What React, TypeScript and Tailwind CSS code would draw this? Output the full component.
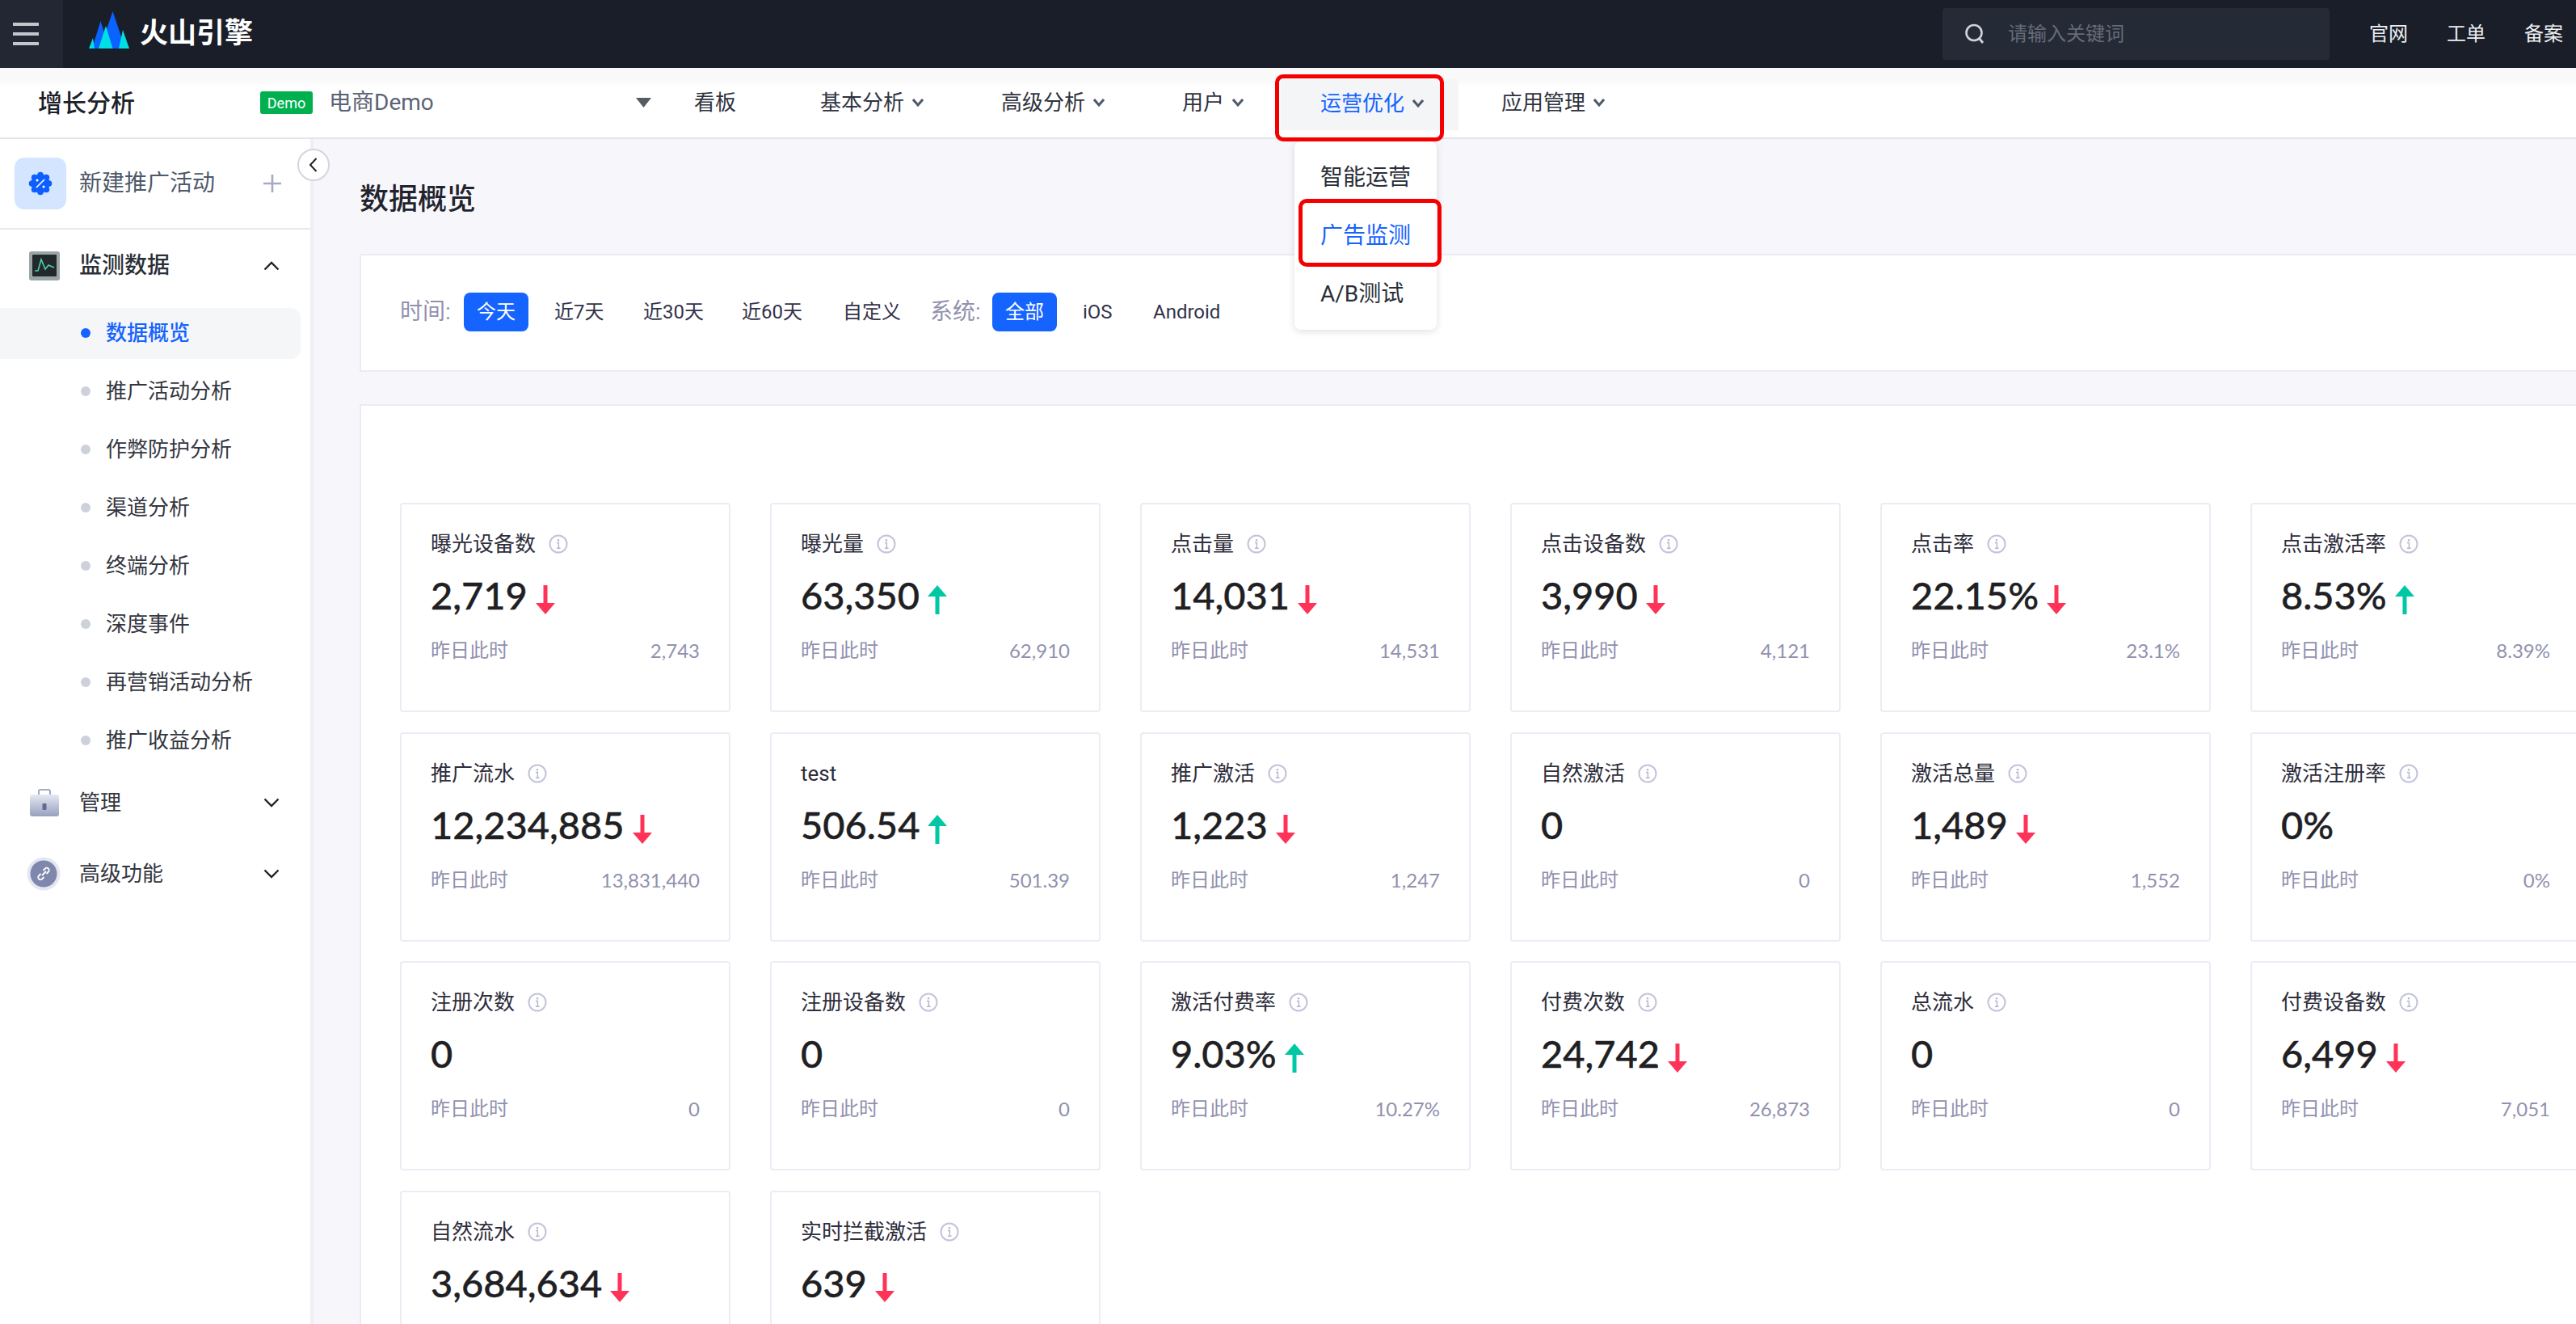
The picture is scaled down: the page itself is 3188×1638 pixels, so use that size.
import React from "react";

type Metric = { t: string; v: string; y?: string; d?: "up" | "down"; noInfo?: boolean };

const metrics: Metric[] = [
  { t: "曝光设备数", v: "2,719", y: "2,743", d: "down" },
  { t: "曝光量", v: "63,350", y: "62,910", d: "up" },
  { t: "点击量", v: "14,031", y: "14,531", d: "down" },
  { t: "点击设备数", v: "3,990", y: "4,121", d: "down" },
  { t: "点击率", v: "22.15%", y: "23.1%", d: "down" },
  { t: "点击激活率", v: "8.53%", y: "8.39%", d: "up" },
  { t: "推广流水", v: "12,234,885", y: "13,831,440", d: "down" },
  { t: "test", v: "506.54", y: "501.39", d: "up", noInfo: true },
  { t: "推广激活", v: "1,223", y: "1,247", d: "down" },
  { t: "自然激活", v: "0", y: "0" },
  { t: "激活总量", v: "1,489", y: "1,552", d: "down" },
  { t: "激活注册率", v: "0%", y: "0%" },
  { t: "注册次数", v: "0", y: "0" },
  { t: "注册设备数", v: "0", y: "0" },
  { t: "激活付费率", v: "9.03%", y: "10.27%", d: "up" },
  { t: "付费次数", v: "24,742", y: "26,873", d: "down" },
  { t: "总流水", v: "0", y: "0" },
  { t: "付费设备数", v: "6,499", y: "7,051", d: "down" },
  { t: "自然流水", v: "3,684,634", d: "down" },
  { t: "实时拦截激活", v: "639", d: "down" },
];

const subItems = ["数据概览", "推广活动分析", "作弊防护分析", "渠道分析", "终端分析", "深度事件", "再营销活动分析", "推广收益分析"];

function Logo() {
  return (
    <svg width="50" height="46" viewBox="0 0 50 46" className="shrink-0">
      <polygon points="4,46 14.5,12 25,46" fill="#0a62ff" />
      <polygon points="14,46 29.5,0 45,46" fill="#0a62ff" />
      <polygon points="0,46 5,33 7,46" fill="#00dfe3" />
      <polygon points="12,46 21,18 29.5,46" fill="#00dfe3" />
      <polygon points="37,46 42,23 50,46" fill="#00dfe3" />
    </svg>
  );
}

function NavChevron() {
  return (
    <svg width="14" height="12" viewBox="0 0 14 12" fill="none" className="shrink-0">
      <path d="M1 2 L7 9 L13 2" stroke="#4e5969" strokeWidth="3" />
    </svg>
  );
}

function SideChevron({ up }: { up?: boolean }) {
  return (
    <svg width="20" height="12" viewBox="0 0 20 12" fill="none" className="shrink-0">
      <path d={up ? "M1.5 10.5 L10 2 L18.5 10.5" : "M1.5 1.5 L10 10 L18.5 1.5"} stroke="#1f2329" strokeWidth="2.4" />
    </svg>
  );
}

function InfoIcon() {
  return (
    <svg width="24" height="24" viewBox="0 0 24 24" fill="none" className="shrink-0">
      <circle cx="12" cy="12" r="10.5" stroke="#c3c3dc" strokeWidth="2" />
      <circle cx="12" cy="7.2" r="1.2" fill="#b4b4d0" />
      <path d="M10 10.5 H12.4 V17 M10 17.2 H14.6" stroke="#b4b4d0" strokeWidth="1.4" />
    </svg>
  );
}

function Arrow({ d }: { d: "up" | "down" }) {
  const c = d === "up" ? "#00c8a5" : "#ff3358";
  return (
    <svg width="24" height="36" viewBox="0 0 24 36" className="ml-[10px] mt-[8px] shrink-0">
      {d === "up" ? (
        <>
          <polygon points="12,0 24,14 0,14" fill={c} />
          <rect x="9.5" y="12" width="5" height="24" fill={c} />
        </>
      ) : (
        <>
          <polygon points="12,36 24,22 0,22" fill={c} />
          <rect x="9.5" y="0" width="5" height="24" fill={c} />
        </>
      )}
    </svg>
  );
}

function Card({ m }: { m: Metric }) {
  return (
    <div className="h-[259px] w-[409px] shrink-0 rounded-[4px] border-2 border-[#ececf5] bg-white px-[36px] pt-[31px]">
      <div className="flex h-[36px] items-center text-[26px] leading-[36px] text-[#2e2e3c]">
        <span>{m.t}</span>
        {!m.noInfo && (
          <span className="ml-[16px]">
            <InfoIcon />
          </span>
        )}
      </div>
      <div className="mt-[19px] flex h-[56px] items-center">
        <span className="pb-[4px] [font-family:Lato,sans-serif] text-[47px] leading-[56px] font-medium text-[#1f1f24] [-webkit-text-stroke:0.4px_#1f1f24]">{m.v}</span>
        {m.d && <Arrow d={m.d} />}
      </div>
      {m.y && (
        <div className="mt-[21px] flex h-[36px] items-center justify-between text-[24px] leading-[36px] text-[#9191ae]">
          <span>昨日此时</span>
          <span className="[font-family:Lato,sans-serif]">{m.y}</span>
        </div>
      )}
    </div>
  );
}

function NavItem({ label, w }: { label: string; w: string }) {
  return (
    <div className={`${w} flex items-center gap-[10px] text-[26px] text-[#2f3340]`}>
      <span>{label}</span>
      <NavChevron />
    </div>
  );
}

export default function App() {
  return (
    <div className="relative h-screen w-full overflow-hidden bg-[#f7f7fb] [font-family:Roboto,'Noto_Sans_CJK_SC',sans-serif]">
      {/* Top bar */}
      <header className="flex h-[84px] items-center bg-[#1a1e28]">
        <div className="flex h-full w-[78px] flex-col items-start justify-center gap-[8px] bg-[#222733] pl-[16px]">
          <span className="block h-[4px] w-[32px] bg-[#c4c6ce]" />
          <span className="block h-[4px] w-[32px] bg-[#c4c6ce]" />
          <span className="block h-[4px] w-[32px] bg-[#c4c6ce]" />
        </div>
        <div className="ml-[32px] flex items-center pb-[10px]">
          <Logo />
        </div>
        <span className="ml-[13px] text-[35px] font-bold text-white">火山引擎</span>
        <div className="ml-auto flex h-[64px] w-[479px] items-center rounded-[4px] bg-[#252a37] pl-[27px]">
          <svg width="26" height="26" viewBox="0 0 26 26" fill="none">
            <circle cx="12" cy="11.5" r="9.5" stroke="#cfd2d8" strokeWidth="2.6" />
            <path d="M18 18 L23 24" stroke="#cfd2d8" strokeWidth="2.8" />
          </svg>
          <span className="ml-[28px] text-[24px] text-[#666b78]">请输入关键词</span>
        </div>
        <div className="ml-[49px] flex gap-[48px] pr-[16px] text-[24px] text-[#eceef2]">
          <span>官网</span>
          <span>工单</span>
          <span>备案</span>
        </div>
      </header>

      {/* Sub nav */}
      <nav className="flex h-[88px] items-center border-b-2 border-[#e4e4ea] bg-[linear-gradient(#f9f9f9_14px,#ffffff_24px)] pl-[47px]">
        <span className="w-[275px] text-[30px] font-medium text-[#1d2129]">增长分析</span>
        <span className="flex h-[28px] w-[65px] items-center justify-center rounded-[3px] bg-[#00b04f] text-[18px] text-white">Demo</span>
        <span className="ml-[20px] w-[380px] text-[28px] text-[#5b6475]">电商Demo</span>
        <svg width="19" height="12" viewBox="0 0 19 12" className="shrink-0">
          <polygon points="0,0 19,0 9.5,12" fill="#555a63" />
        </svg>
        <span className="ml-[53px] w-[156px] text-[26px] text-[#2f3340]">看板</span>
        <NavItem label="基本分析" w="w-[224px]" />
        <NavItem label="高级分析" w="w-[224px]" />
        <NavItem label="用户" w="w-[122px]" />
        <div className="mr-[53px] mt-[14px] flex h-[63px] w-[220px] items-center gap-[10px] self-start bg-[#f4f5f7] pb-[3px] pl-[49px] text-[26px] text-[#1664ff]">
          <span>运营优化</span>
          <NavChevron />
        </div>
        <NavItem label="应用管理" w="w-[224px]" />
      </nav>

      <div className="flex h-[calc(100vh-172px)]">
        {/* Sidebar */}
        <aside className="w-[388px] shrink-0 border-r-4 border-[#eeeef4] bg-white">
          <div className="flex h-[112px] items-center border-b-2 border-[#e8e8ee] pl-[18px] pr-[36px]">
            <div className="flex h-[64px] w-[64px] items-center justify-center rounded-[12px] bg-[#d4e5ff]">
              <svg width="30" height="30" viewBox="0 0 30 30">
                <g fill="#0f5fff">
                  <circle cx="15" cy="15" r="11.5" />
                  <circle cx="15" cy="4.5" r="3.8" />
                  <circle cx="15" cy="25.5" r="3.8" />
                  <circle cx="4.5" cy="15" r="3.8" />
                  <circle cx="25.5" cy="15" r="3.8" />
                  <circle cx="7.6" cy="7.6" r="3.8" />
                  <circle cx="22.4" cy="7.6" r="3.8" />
                  <circle cx="7.6" cy="22.4" r="3.8" />
                  <circle cx="22.4" cy="22.4" r="3.8" />
                </g>
                <path d="M10 20 L20 10" stroke="#fff" strokeWidth="1.6" />
                <circle cx="11" cy="11" r="1.5" fill="#fff" />
                <circle cx="19" cy="19" r="1.5" fill="#fff" />
              </svg>
            </div>
            <span className="ml-[16px] text-[28px] text-[#4e5969]">新建推广活动</span>
            <svg width="22" height="22" viewBox="0 0 22 22" className="ml-auto">
              <path d="M11 0 V22 M0 11 H22" stroke="#a6aac2" strokeWidth="2.6" />
            </svg>
          </div>

          <div className="flex h-[92px] items-center pb-[3px] pl-[36px] pr-[38px]">
            <svg width="38" height="36" viewBox="0 0 38 36" className="shrink-0">
              <rect width="38" height="36" rx="3" fill="#9aa5a6" />
              <rect x="4" y="4" width="30" height="27" rx="1" fill="#23282c" />
              <path d="M7 24 H11 L15 10 L20 22 L24 17 L31 20" fill="none" stroke="#4fd1a5" strokeWidth="1.6" />
            </svg>
            <span className="ml-[24px] text-[28px] font-medium text-[#2b2f38]">监测数据</span>
            <span className="ml-auto">
              <SideChevron up />
            </span>
          </div>

          <div className="flex flex-col">
            {subItems.map((s, i) => (
              <div key={s} className="flex h-[72px] items-center">
                <div className={`flex h-[63px] w-[372px] items-center rounded-r-[12px] pl-[100px] ${i === 0 ? "bg-[#f5f6f8]" : ""}`}>
                  <span className={`block h-[12px] w-[12px] rounded-full ${i === 0 ? "bg-[#1664ff]" : "bg-[#cdd1d9]"}`} />
                  <span className={`ml-[19px] text-[26px] ${i === 0 ? "font-medium text-[#1664ff]" : "text-[#33363f]"}`}>{s}</span>
                </div>
              </div>
            ))}
          </div>

          <div className="-mt-[3px] flex h-[88px] items-center pl-[37px] pr-[38px]">
            <svg width="36" height="34" viewBox="0 0 36 34" className="shrink-0">
              <defs>
                <linearGradient id="case" x1="0" y1="0" x2="0" y2="1">
                  <stop offset="0" stopColor="#e6e9f4" />
                  <stop offset="1" stopColor="#97a0bd" />
                </linearGradient>
              </defs>
              <path d="M11 8 V3 Q11 1 13 1 H23 Q25 1 25 3 V8" fill="none" stroke="#a3aac4" strokeWidth="2" />
              <rect y="7" width="36" height="27" rx="3" fill="url(#case)" />
              <rect x="15.5" y="18" width="5" height="8" rx="1" fill="#5f6a8d" />
            </svg>
            <span className="ml-[25px] text-[26px] text-[#33363f]">管理</span>
            <span className="ml-auto">
              <SideChevron />
            </span>
          </div>
          <div className="flex h-[88px] items-center pl-[33px] pr-[38px]">
            <svg width="42" height="42" viewBox="0 0 42 42" className="shrink-0">
              <circle cx="21" cy="21" r="20.5" fill="#e4e7f2" />
              <circle cx="21" cy="21" r="16.5" fill="#7f88ac" />
              <path d="M19 23 L24 18 M17.5 21 L14.5 24 A3 3 0 0 0 18.5 28 L21.5 25 M20.5 17 L23.5 14 A3 3 0 0 1 27.5 18 L24.5 21" fill="none" stroke="#fff" strokeWidth="1.8" />
            </svg>
            <span className="ml-[23px] text-[26px] text-[#33363f]">高级功能</span>
            <span className="ml-auto">
              <SideChevron />
            </span>
          </div>
        </aside>

        {/* Main */}
        <main className="min-w-0 flex-1 overflow-hidden pl-[57px]">
          <h1 className="flex h-[142px] items-center pt-[7px] text-[36px] font-medium text-[#23232e]">数据概览</h1>
          <section className="flex h-[146px] w-[2800px] items-center border-2 border-[#ebebf5] bg-white pb-[2px] pl-[48px] text-[24px] text-[#33334a]">
            <span className="w-[79px] text-[28px] text-[#9191ae]">时间:</span>
            <span className="flex h-[48px] w-[80px] items-center justify-center rounded-[8px] bg-[#1664ff] text-white">今天</span>
            <span className="ml-[32px] w-[60px] whitespace-nowrap">近7天</span>
            <span className="ml-[50px] w-[73px] whitespace-nowrap">近30天</span>
            <span className="ml-[49px] w-[74px] whitespace-nowrap">近60天</span>
            <span className="ml-[51px] w-[72px] whitespace-nowrap">自定义</span>
            <span className="ml-[36px] w-[77px] text-[28px] text-[#9191ae]">系统:</span>
            <span className="flex h-[48px] w-[80px] items-center justify-center rounded-[8px] bg-[#1664ff] text-white">全部</span>
            <span className="ml-[32px] w-[39px]">iOS</span>
            <span className="ml-[48px]">Android</span>
          </section>
          <section className="mt-[40px] w-[2800px] border-2 border-[#ebebf5] bg-white pl-[48px] pt-[120px]">
            <div className="grid grid-cols-[repeat(6,409px)] gap-x-[49px] gap-y-[24.7px]">
              {metrics.map((m) => (
                <Card key={m.t} m={m} />
              ))}
            </div>
          </section>
        </main>
      </div>

      {/* Collapse handle */}
      <button className="absolute left-[368px] top-[184px] flex h-[40px] w-[40px] items-center justify-center rounded-full border-2 border-[#d2d6de] bg-white">
        <svg width="14" height="20" viewBox="0 0 14 20" fill="none">
          <path d="M10.5 2 L3 10 L10.5 18" stroke="#1f2329" strokeWidth="2" />
        </svg>
      </button>

      {/* Dropdown */}
      <div className="absolute left-[1602px] top-[175px] flex h-[233px] w-[176px] flex-col rounded-[8px] bg-white pt-[9px] text-[28px] text-[#2b2f38] shadow-[0_2px_10px_rgba(0,0,0,0.13)]">
        <div className="flex h-[72px] items-center pl-[32px]">智能运营</div>
        <div className="flex h-[72px] items-center pl-[32px] text-[#1664ff]">广告监测</div>
        <div className="flex h-[72px] items-center pl-[32px]">A/B测试</div>
      </div>

      {/* Red annotations */}
      <div className="pointer-events-none absolute left-[1578px] top-[92px] h-[83px] w-[209px] rounded-[10px] border-[5px] border-[#f50000]" />
      <div className="pointer-events-none absolute left-[1607px] top-[246px] h-[84px] w-[177px] rounded-[10px] border-[5px] border-[#f50000]" />
    </div>
  );
}
